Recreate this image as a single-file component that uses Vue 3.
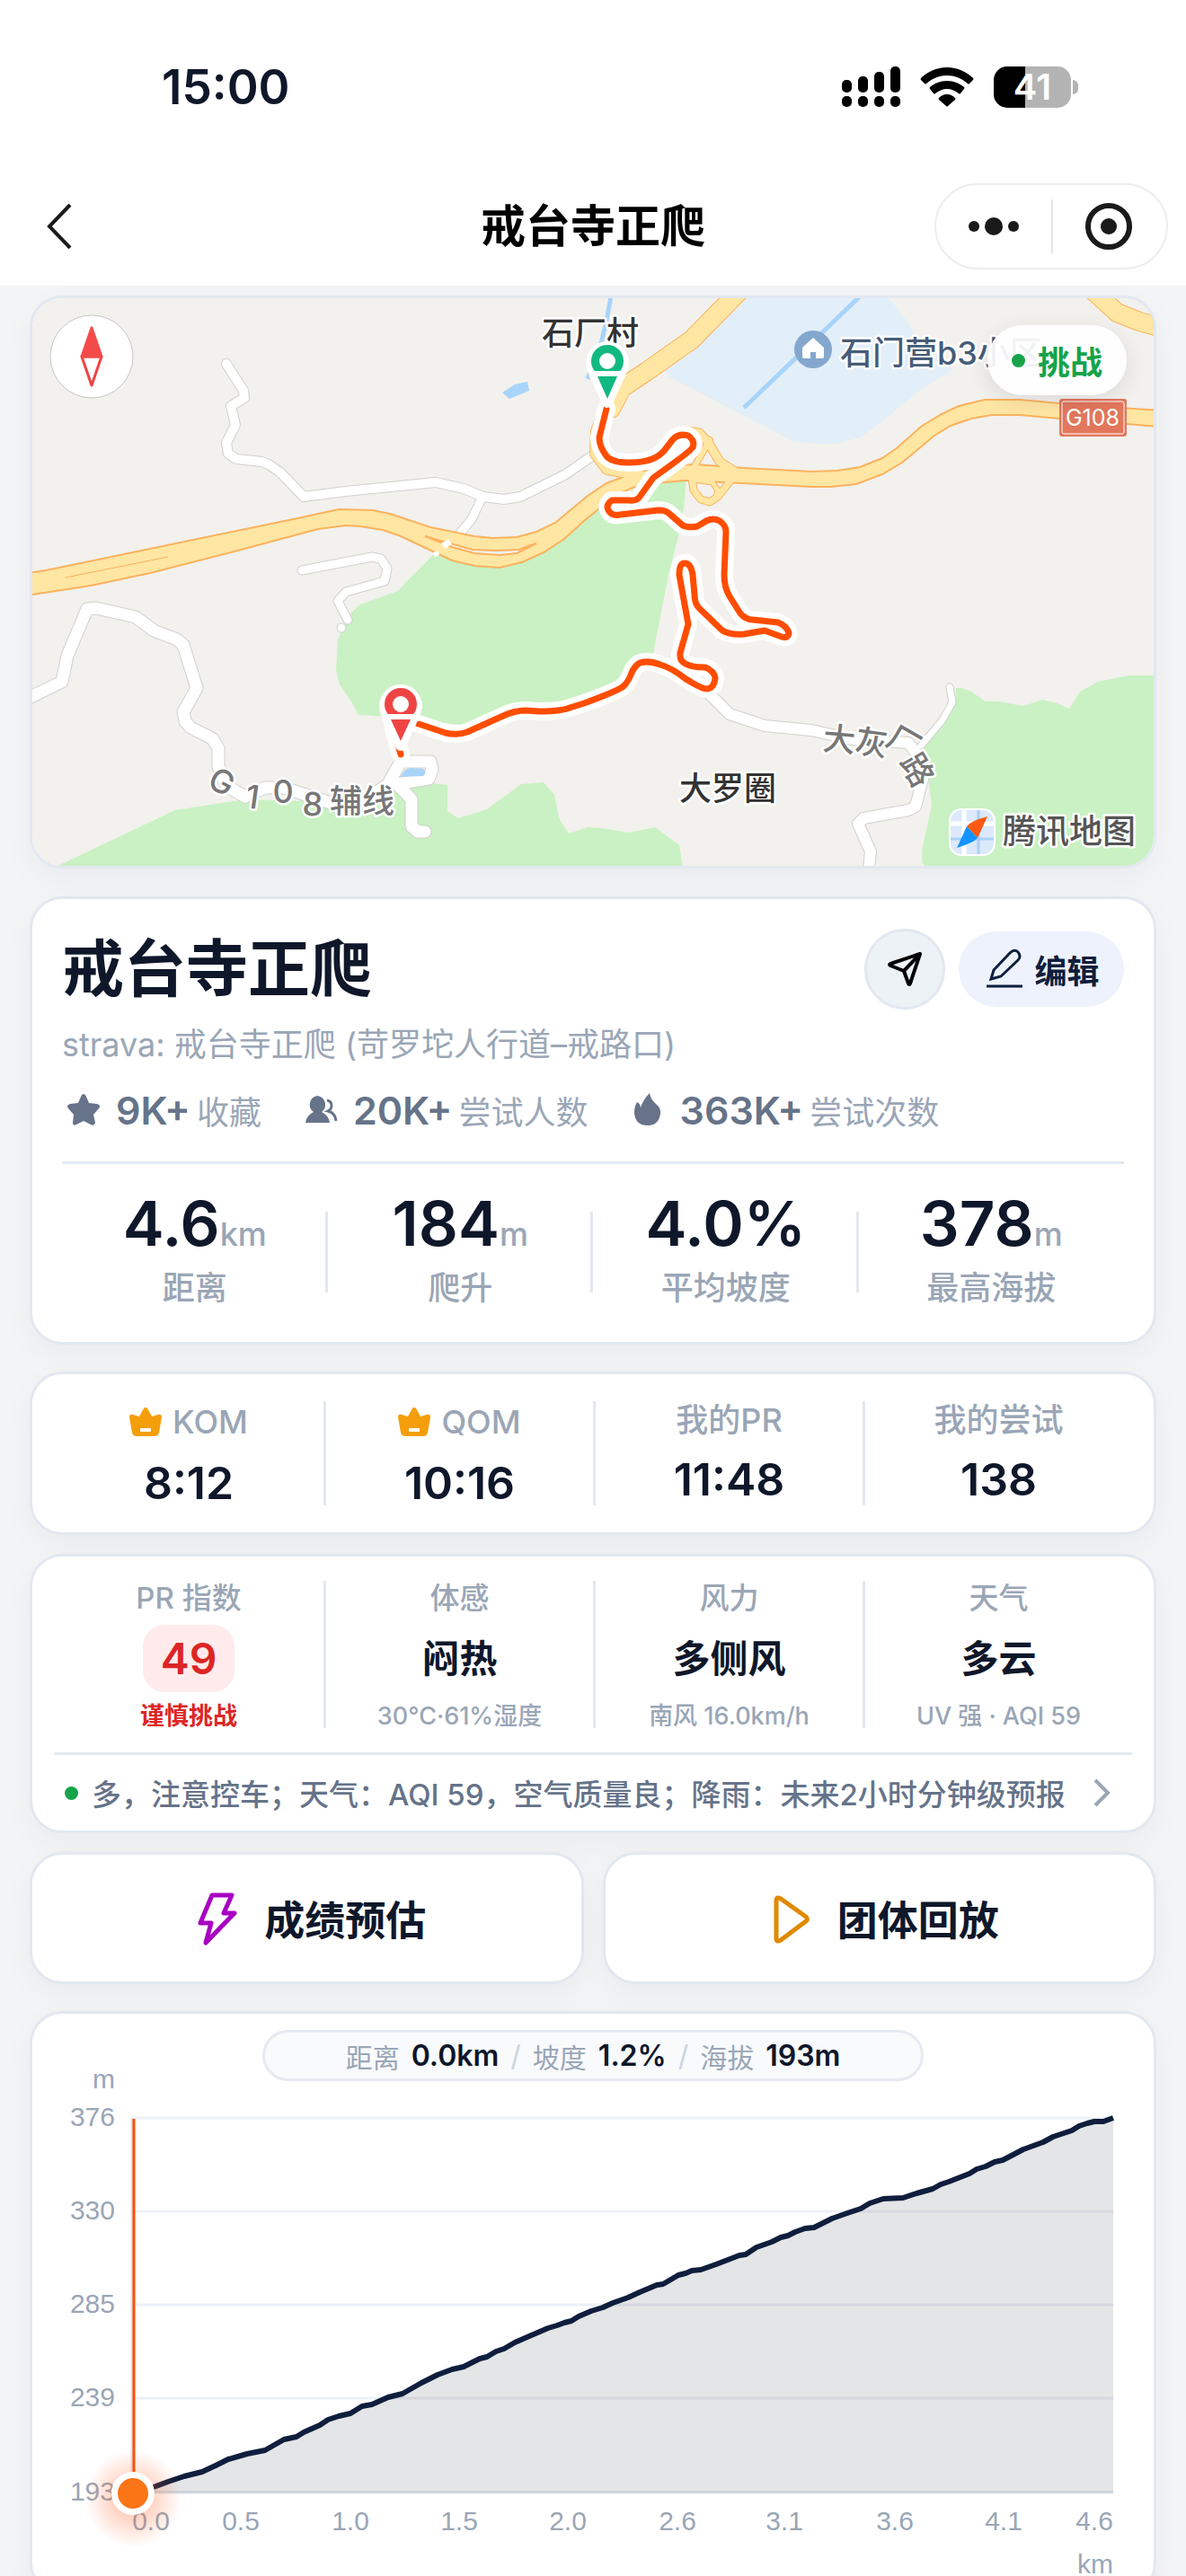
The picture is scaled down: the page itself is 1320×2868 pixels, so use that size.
<script setup>
const counts = [
  { icon: 'star', value: '9K+', label: '收藏' },
  { icon: 'users', value: '20K+', label: '尝试人数' },
  { icon: 'flame', value: '363K+', label: '尝试次数' },
]

const metrics = [
  { value: '4.6', unit: 'km', label: '距离' },
  { value: '184', unit: 'm', label: '爬升' },
  { value: '4.0%', unit: '', label: '平均坡度' },
  { value: '378', unit: 'm', label: '最高海拔' },
]

const records = [
  { label: 'KOM', value: '8:12', crown: true },
  { label: 'QOM', value: '10:16', crown: true },
  { label: '我的PR', value: '11:48', crown: false },
  { label: '我的尝试', value: '138', crown: false },
]

const conditions = [
  { label: 'PR 指数', value: '49', note: '谨慎挑战', alert: true },
  { label: '体感', value: '闷热', note: '30℃·61%湿度', alert: false },
  { label: '风力', value: '多侧风', note: '南风 16.0km/h', alert: false },
  { label: '天气', value: '多云', note: 'UV 强 · AQI 59', alert: false },
]

const readout = [
  { label: '距离', value: '0.0km' },
  { label: '坡度', value: '1.2%' },
  { label: '海拔', value: '193m' },
]

const yTicks = [
  { y: 2358, label: '376' },
  { y: 2462, label: '330' },
  { y: 2566, label: '285' },
  { y: 2670, label: '239' },
  { y: 2775, label: '193' },
]

const xTicks = [
  { x: 168, label: '0.0' },
  { x: 268, label: '0.5' },
  { x: 390, label: '1.0' },
  { x: 511, label: '1.5' },
  { x: 632, label: '2.0' },
  { x: 754, label: '2.6' },
  { x: 873, label: '3.1' },
  { x: 996, label: '3.6' },
  { x: 1117, label: '4.1' },
  { x: 1218, label: '4.6' },
]

const profile =
  '148,2776 171,2769 187,2763 205,2757 225,2752 240,2745 254,2738 275,2732 295,2728 316,2716 330,2713 338,2708 356,2700 365,2694 377,2690 390,2687 403,2679 414,2677 432,2669 448,2665 469,2653 487,2644 503,2638 516,2635 534,2626 542,2624 552,2618 561,2615 573,2608 589,2601 610,2592 620,2589 628,2586 636,2584 644,2579 658,2573 671,2569 682,2564 699,2558 712,2552 731,2544 738,2543 755,2533 763,2531 770,2528 780,2527 797,2521 810,2516 823,2511 830,2510 842,2502 859,2496 869,2491 877,2489 885,2485 896,2481 906,2480 926,2470 943,2464 958,2459 968,2453 983,2448 1005,2447 1020,2442 1038,2437 1047,2432 1056,2429 1079,2420 1087,2415 1097,2412 1107,2407 1116,2405 1139,2393 1161,2385 1172,2379 1193,2372 1201,2367 1210,2364 1218,2362 1228,2362 1239,2358'

const whiteRoads = [
  { w: 10, d: 'M252 405L271 435L272 443L257 452L262 473L252 493L254 505L263 511L291 514L299 517L312 526L338 553L385 547L485 537L516 544L538 553L561 556L579 553L628 529L663 505' },
  { w: 9, d: 'M536 555L525 578L505 602' },
  { w: 9, d: 'M336 635L414 620L424 622L431 633L428 647L385 659L376 669L387 690' },
  { w: 9, d: 'M380 699L380 699' },
  { w: 13, d: 'M28 779L69 759L75 730L97 678L107 677L151 687L171 702L197 712L204 718L219 766L204 793L206 803L212 810L236 822L243 833L243 853L252 875L273 887L295 877L316 877L365 893L405 892L432 873L446 848L479 848L481 857L477 867L442 873L458 890L458 920L465 926L473 926' },
  { w: 12, d: 'M785 768L812 795L851 808L903 813L948 823L1011 827L1021 840L1027 867L1019 898L1011 902L961 911L955 917L969 948L967 968' },
  { w: 7, d: 'M1025 830L1048 803L1060 782L1057 765' },
]

const mainRoads = [
  { w: 20, d: 'M822 325L770 378L719 414L692 432L680 455' },
  { w: 12, d: 'M678 445L664 480L663 505L676 522L710 528' },
  { w: 20, d: 'M1218 325L1243 348L1268 358L1290 364' },
  { w: 9, d: 'M762 480L778 482L788 492L801 514L818 525' },
  { w: 6, d: 'M790 490L772 521' },
  { w: 7, d: 'M770 532L772 546L780 556L790 559L799 553L814 534' },
  { w: 5, d: 'M772 534L793 537L799 546L796 556' },
]

const highway =
  'M30 638L51 635L336 576L377 567L414 568L434 572L479 587L528 597L548 599L575 598L597 592L618 582L654 552L675 538L704 527L738 519L774 517L828 521L903 525L932 524L957 520L982 510L998 499L1025 475L1048 461L1067 452L1096 445L1135 445L1179 449L1290 457L1290 475L1179 466L1135 462L1104 462L1081 466L1058 474L1040 485L1004 515L982 528L953 539L924 542L903 542L826 538L762 535L739 537L712 540L687 550L650 580L628 600L605 615L581 626L556 632L528 630L503 624L446 597L426 590L401 586L385 585L354 589L257 615L167 638L101 652L30 663Z'

const route =
  'M675 455L667 487Q667 498 676 509Q683 515 700 515Q728 515 739 502L749 489Q756 482 766 485Q774 491 771 498Q768 503 727 532L712 553Q709 558 700 557L681 557Q674 562 677 568Q681 575 690 573L733 568Q741 568 745 572L760 585Q767 588 776 586L786 580Q794 576 801 580Q808 585 808 592L806 640Q806 654 812 664L824 683Q830 690 838 690L866 693Q876 697 878 705Q877 711 870 709L851 702L828 706Q812 707 804 702L778 677Q773 672 773 662L771 640Q769 627 762 627Q756 627 756 640L766 695L757 727Q756 736 763 739Q770 743 785 743Q795 747 796 755Q795 766 787 767Q782 767 770 760L762 755Q748 744 735 740Q722 735 712 738Q706 742 703 749Q700 758 694 764Q688 769 650 783L634 788Q624 792 600 792L585 791Q573 791 560 797L520 815Q508 819 496 816L463 805L437 800L438 812L446 840'
</script>

<template>
  <div class="page">
    <header class="top">
      <div class="status">
        <span class="clock">15:00</span>
        <div class="status-icons">
          <svg class="signal" viewBox="0 0 67 46" aria-hidden="true">
            <rect x="0" y="15" width="11" height="14" rx="5" />
            <rect x="18" y="11" width="11" height="18" rx="5" />
            <rect x="36" y="6" width="11" height="23" rx="5" />
            <rect x="54" y="0" width="11" height="29" rx="5" />
            <rect x="0" y="33" width="11" height="12" rx="5" />
            <rect x="18" y="33" width="11" height="12" rx="5" />
            <rect x="36" y="33" width="11" height="12" rx="5" />
            <rect x="54" y="33" width="11" height="12" rx="5" />
          </svg>
          <svg class="wifi" viewBox="0 0 60 44" aria-hidden="true">
            <path d="M30 0C42 0 52 5 59 12Q60 13 59 14L55 18Q54 19 53 18C46 12 38 9 30 9S14 12 7 18Q6 19 5 18L1 14Q0 13 1 12C8 5 18 0 30 0Z" />
            <path d="M30 15C38 15 44 18 49 22Q50 23 49 24L45 29Q44 30 43 29C39 26 35 24 30 24S21 26 17 29Q16 30 15 29L11 24Q10 23 11 22C16 18 22 15 30 15Z" />
            <path d="M30 30C34 30 37 32 39 34Q40 35 39 36L31 43Q30 44 29 43L21 36Q20 35 21 34C23 32 26 30 30 30Z" />
          </svg>
          <div class="battery"><span>41</span></div>
        </div>
      </div>
      <nav class="nav">
        <button class="back" aria-label="返回">
          <svg viewBox="0 0 28 50"><path d="M26 1L3 25L26 49" /></svg>
        </button>
        <h1 class="nav-title">戒台寺正爬</h1>
        <div class="capsule">
          <button aria-label="更多">
            <svg viewBox="0 0 60 60"><circle cx="8" cy="30" r="6" /><circle cx="30" cy="30" r="10" /><circle cx="52" cy="30" r="6" /></svg>
          </button>
          <button aria-label="关闭">
            <svg viewBox="0 0 60 60"><circle class="ring" cx="30" cy="30" r="23" /><circle cx="30" cy="30" r="9" /></svg>
          </button>
        </div>
      </nav>
    </header>

    <main class="content">
      <section class="card map-card">
        <svg class="map" viewBox="36 332 1248 632" role="img" aria-label="路线地图">
          <rect x="36" y="332" width="1248" height="632" fill="#f2f1ed" />
          <path fill="#c9f1c3" d="M483 617L450 650L443 658L401 673L389 684L376 712L374 747L378 762L389 778L399 796L432 798L512 807L650 775L700 760L727 727L744 640L756 593L761 567L764 530L733 530L650 575L556 625Z" />
          <path fill="#c9f1c3" d="M60 966L195 902L273 890L369 893L479 872L498 874V903L510 911L542 901L580 873L605 871L617 885L622 911L633 928L654 921L670 922L700 927L729 921L756 941L760 966Z" />
          <path fill="#c9f1c3" d="M1025 833L1046 803L1064 780V766L1070 766L1081 770L1097 781L1112 781L1139 786L1160 779L1177 783L1190 789L1202 770L1222 759L1257 752H1286V966H1031L1026 960V947L1037 897L1033 863Z" />
          <path fill="#e2eef8" d="M818 330L826 340L810 350L762 397L740 413L746 420L884 492L909 494L932 494L957 487L977 473L1023 435L1060 412L1040 385L1019 373L1009 357L988 330Z" />
          <g class="stream">
            <path d="M957 330L828 454" />
            <path d="M680 330L675 357L669 382L654 422" />
          </g>
          <path fill="#a8d4fa" d="M559 437L573 428L587 425L589 435L567 444Z" />
          <path v-for="r in whiteRoads" :key="'c' + r.d" class="road" stroke="#d0d0ce" :stroke-width="r.w + 2" :d="r.d" />
          <path v-for="r in whiteRoads" :key="r.d" class="road" stroke="#fff" :stroke-width="r.w" :d="r.d" />
          <path fill="#a8d4fa" d="M446 865Q450 855 458 855L471 856Q476 860 471 864Z" />
          <path v-for="r in mainRoads" :key="'c' + r.d" class="road" stroke="#fbb25e" :stroke-width="r.w + 2" :d="r.d" />
          <path :d="highway" fill="#ffe6a3" stroke="#fbb25e" stroke-width="2" />
          <path v-for="r in mainRoads" :key="r.d" class="road" stroke="#ffe6a3" :stroke-width="r.w" :d="r.d" />
          <path fill="#f2f1ed" stroke="#fbb25e" stroke-width="2" d="M473 597L526 612L552 613L577 612L597 605L575 616L556 618L528 616L503 609Z" />
          <path fill="none" stroke="#fbb25e" stroke-width="1" d="M73 643L187 620" />
          <path fill="none" stroke="#fff" stroke-width="7" d="M501 603L493 608" />
          <path fill="none" stroke="#fff" stroke-width="5" d="M488 615L483 618" />
          <path class="halo" :d="route" />
          <path class="route" :d="route" />

          <g class="place">
            <text x="603" y="384">石厂村</text>
            <text x="756" y="891">大罗圈</text>
          </g>
          <circle cx="905" cy="389" r="21" fill="#84a7cd" />
          <path fill="#fff" d="M905 376L917 387V397Q917 399 915 399H908V392H902V399H895Q893 399 893 397V387Z" />
          <text class="poi" x="935" y="406">石门营b3小区</text>
          <g class="street">
            <text transform="translate(247 870) rotate(28)" y="13">G</text>
            <text transform="translate(281 887) rotate(8)" y="13">1</text>
            <text transform="translate(315 881)" y="13">0</text>
            <text transform="translate(348 895) rotate(3)" y="13">8</text>
            <text x="403" y="905">辅线</text>
            <text transform="translate(934 823) rotate(5)" y="13">大</text>
            <text transform="translate(970 827) rotate(8)" y="13">灰</text>
            <text transform="translate(1006 826) rotate(30)" y="13">厂</text>
            <text transform="translate(1021 857) rotate(60)" y="13">路</text>
          </g>
          <rect x="1179" y="444" width="75" height="42" rx="3" fill="#e2775c" />
          <rect x="1182" y="447" width="69" height="36" rx="2" fill="none" stroke="#fff" stroke-width="1" />
          <text class="shield" x="1216" y="474">G108</text>

          <g transform="translate(676 402)">
            <path class="pin-edge" d="M-17 8A18 18 0 1 1 17 8L0 46Z" />
            <circle r="18" fill="#12b981" /><circle r="9" fill="#fff" />
            <rect x="-20" y="11" width="40" height="8" fill="#fff" />
            <path fill="#12b981" d="M-11 17H11L0 42Z" />
          </g>
          <g transform="translate(446 784)">
            <path class="pin-edge" d="M-17 8A18 18 0 1 1 17 8L0 46Z" />
            <circle r="18" fill="#ef4444" /><circle r="9" fill="#fff" />
            <rect x="-20" y="11" width="40" height="8" fill="#fff" />
            <path fill="#ef4444" d="M-11 17H11L0 41Z" />
          </g>

          <circle cx="102" cy="397" r="46" fill="#fff" stroke="#c4c4c4" stroke-width="1" />
          <path fill="#fff" stroke="#ef4444" stroke-width="3" stroke-linejoin="round" d="M91 397H113L102 429Z" />
          <path fill="#f54a4a" stroke="#f54a4a" stroke-width="3" stroke-linejoin="round" d="M91 397L102 365L113 397Z" />

          <rect x="1056" y="900" width="52" height="53" rx="14" fill="#fff" />
          <rect x="1058" y="902" width="48" height="49" rx="12" fill="#dce9fb" />
          <path stroke="#fff" stroke-width="5" fill="none" d="M1073 902V951M1058 917H1106" />
          <path stroke="#a9d0fa" stroke-width="3" fill="none" d="M1089 902V951M1058 934H1106" />
          <path fill="#ff5a12" d="M1099 909L1088 933L1076 920Q1080 914 1099 909Z" />
          <path fill="#1494ff" d="M1065 944L1076 920L1088 933Q1084 938 1065 944Z" />
          <text class="brand" x="1116" y="939">腾讯地图</text>
        </svg>
        <span class="tag"><i></i>挑战</span>
      </section>

      <section class="card summary">
        <div class="summary-head">
          <h2>戒台寺正爬</h2>
          <button class="share" aria-label="分享">
            <svg viewBox="0 0 90 90"><path d="M62 28L29 39Q27 40 29 41L44 47L49 61Q50 63 51 61ZM44 47L62 28" /></svg>
          </button>
          <button class="edit">
            <svg viewBox="0 0 40 46"><path d="M5 34L8 24L26 5Q31 0 35 4Q39 9 35 13L16 31ZM0 42H40" /></svg>
            编辑
          </button>
        </div>
        <p class="source">strava: 戒台寺正爬 (苛罗坨人行道–戒路口)</p>
        <ul class="counts">
          <li v-for="c in counts" :key="c.label">
            <svg viewBox="0 0 48 40" aria-hidden="true">
              <path v-if="c.icon === 'star'" d="M24 2Q26 2 27 5L30 12L39 13Q44 15 41 18L35 25L37 34Q36 38 32 36L24 32L16 36Q12 38 12 34L13 25L7 18Q4 15 9 13L18 12L21 5Q22 2 24 2Z" />
              <template v-else-if="c.icon === 'users'">
                <path d="M20 4A10 10 0 0 1 25 22Q33 26 34 34H7Q8 26 16 22A10 10 0 0 1 20 4Z" />
                <path class="thin" d="M31 9Q36 10 36 15Q36 19 32 21Q40 23 41 32" />
              </template>
              <path v-else d="M26 1Q27 8 33 13Q39 18 38 24Q36 37 24 37Q10 37 9 23Q9 16 12 11Q15 12 16 17Q19 8 26 1Z" />
            </svg>
            <strong>{{ c.value }}</strong><span>{{ c.label }}</span>
          </li>
        </ul>
        <dl class="metrics">
          <div v-for="m in metrics" :key="m.label">
            <dd>{{ m.value }}<small>{{ m.unit }}</small></dd>
            <dt>{{ m.label }}</dt>
          </div>
        </dl>
      </section>

      <section class="card records">
        <dl class="cells">
          <div v-for="r in records" :key="r.label">
            <dt>
              <svg v-if="r.crown" class="crown" viewBox="0 0 36 34" aria-hidden="true">
                <path d="M16 2Q18 0 20 2L25 11L32 9Q36 8 36 12L33 29Q32 33 28 33H8Q4 33 3 29L0 12Q0 8 4 9L11 11Z" />
                <rect x="12" y="24" width="12" height="4" rx="1" fill="#fff" />
              </svg>
              {{ r.label }}
            </dt>
            <dd>{{ r.value }}</dd>
          </div>
        </dl>
      </section>

      <section class="card conditions">
        <dl class="cells">
          <div v-for="c in conditions" :key="c.label" :class="{ alert: c.alert }">
            <dt>{{ c.label }}</dt>
            <dd class="reading"><span>{{ c.value }}</span></dd>
            <dd class="note">{{ c.note }}</dd>
          </div>
        </dl>
        <a class="ticker" href="#weather">
          <i></i>
          <span>多，注意控车；天气：AQI 59，空气质量良；降雨：未来2小时分钟级预报</span>
          <svg viewBox="0 0 20 32" aria-hidden="true"><path d="M3 2L17 16L3 30" /></svg>
        </a>
      </section>

      <div class="actions">
        <button class="card">
          <svg viewBox="0 0 50 60" aria-hidden="true"><path stroke="#a800c2" d="M19 4H41L32 24H44L12 57L18 35H6Z" /></svg>
          成绩预估
        </button>
        <button class="card">
          <svg viewBox="0 0 50 60" aria-hidden="true"><path stroke="#e08a00" d="M9 10Q9 5 14 8L42 28Q45 31 42 33L14 54Q9 57 9 52Z" /></svg>
          团体回放
        </button>
      </div>

      <section class="card chart">
        <p class="readout">
          <template v-for="(r, i) in readout" :key="r.label">
            <span v-if="i" class="slash">/</span>
            <span>{{ r.label }}</span>
            <strong>{{ r.value }}</strong>
          </template>
        </p>
        <svg class="plot" viewBox="36 2317 1248 570" role="img" aria-label="海拔剖面图">
          <defs>
            <radialGradient id="glow">
              <stop offset="0.4" stop-color="#ff5a1f" stop-opacity="0.26" />
              <stop offset="1" stop-color="#ff5a1f" stop-opacity="0" />
            </radialGradient>
          </defs>
          <g stroke="#edf1f6" stroke-width="3">
            <path v-for="t in yTicks" :key="t.y" :d="`M147 ${t.y}H1239`" />
          </g>
          <path d="M147 2775H1239M147 2358V2775" stroke="#dde3ea" stroke-width="3" />
          <polygon :points="`${profile} 1239,2775 148,2775`" fill="#0f172a" fill-opacity="0.115" />
          <polyline :points="profile" fill="none" stroke="#0f1e3d" stroke-width="6" stroke-linejoin="round" />
          <g class="axis" text-anchor="end">
            <text x="128" y="2325">m</text>
            <text v-for="t in yTicks" :key="t.label" x="128" :y="t.y + 9">{{ t.label }}</text>
            <text x="1239" y="2865">km</text>
          </g>
          <g class="axis" text-anchor="middle">
            <text v-for="t in xTicks" :key="t.label" :x="t.x" y="2817">{{ t.label }}</text>
          </g>
          <path d="M149 2359V2776" stroke="#ff4d00" stroke-width="3" />
          <circle cx="148" cy="2782" r="54" fill="url(#glow)" />
          <circle cx="148" cy="2776" r="24" fill="#fff" />
          <circle cx="148" cy="2776" r="17" fill="#fb7516" />
        </svg>
      </section>
    </main>
  </div>
</template>

<style>
html,
body {
  margin: 0;
  background: #f3f4f6;
}
</style>

<style scoped>
.page {
  display: flex;
  flex-direction: column;
  height: 100vh;
  overflow: hidden;
  background: #f3f4f6;
  color: #0f172a;
  font-family: Inter, "Noto Sans CJK SC", sans-serif;
}

h1, h2, p, ul, dl, dd, dt {
  margin: 0;
  padding: 0;
}

button {
  margin: 0;
  padding: 0;
  border: 0;
  background: none;
  color: inherit;
  font: inherit;
}

svg {
  display: block;
}

.top {
  flex: none;
  background: #fff;
}

.status {
  display: flex;
  justify-content: space-between;
  align-items: center;
  padding: 66px 120px 0 180px;
  height: 62px;
}

.clock {
  font-size: 53px;
  line-height: 62px;
  font-weight: 600;
}

.status-icons {
  display: flex;
  align-items: center;
  gap: 20px;
}

.signal {
  width: 67px;
  height: 46px;
}

.wifi {
  width: 60px;
  height: 44px;
}

.battery {
  position: relative;
  display: flex;
  justify-content: center;
  width: 86px;
  height: 46px;
  margin-left: 2px;
  margin-right: 8px;
  border-radius: 15px;
  background: linear-gradient(90deg, #000 41%, #b3b3b3 41%);
  color: #fff;
  font-size: 40px;
  line-height: 46px;
  font-weight: 600;
}

.battery::after {
  content: "";
  position: absolute;
  left: 88px;
  top: 15px;
  width: 6px;
  height: 16px;
  border-radius: 0 6px 6px 0;
  background: #b3b3b3;
}

.nav {
  display: grid;
  grid-template-columns: 1fr auto 1fr;
  align-items: center;
  height: 96px;
  padding: 76px 20px 18px;
}

.back {
  justify-self: start;
  margin-left: 32px;
}

.back svg {
  width: 28px;
  height: 50px;
}

.back path {
  fill: none;
  stroke: #1a1a1a;
  stroke-width: 4;
}

.nav-title {
  color: #000;
  font-size: 50px;
  line-height: 60px;
  font-weight: 600;
}

.capsule {
  display: flex;
  justify-self: end;
  width: 260px;
  height: 96px;
  box-sizing: border-box;
  border: 2px solid #ededed;
  border-radius: 48px;
}

.capsule button {
  flex: 1;
  display: flex;
  align-items: center;
  justify-content: center;
}

.capsule button + button {
  background: linear-gradient(#e5e5e5, #e5e5e5) left center / 2px 60px no-repeat;
}

.capsule svg {
  width: 60px;
  height: 60px;
  fill: #1a1a1a;
}

.capsule .ring {
  fill: none;
  stroke: #1a1a1a;
  stroke-width: 6;
}

.content {
  flex: 1;
  min-height: 0;
  overflow: hidden;
  padding: 11px 33px 0;
}

.card {
  box-sizing: border-box;
  border: 3px solid #e2e8f0;
  border-radius: 36px;
  background: #fff;
  box-shadow: 0 12px 36px rgba(15, 23, 42, 0.04);
}

.map-card {
  position: relative;
  overflow: hidden;
}

.map {
  width: 100%;
}

.stream {
  fill: none;
  stroke: #a8d4fa;
  stroke-width: 5;
}

.road {
  fill: none;
  stroke-linecap: round;
  stroke-linejoin: round;
}

.halo,
.route {
  fill: none;
  stroke-linejoin: round;
  stroke-linecap: round;
}

.halo {
  stroke: #fff;
  stroke-width: 20;
}

.route {
  stroke: #ff4d00;
  stroke-width: 7;
}

.map text {
  font-size: 36px;
  stroke: #fff;
  stroke-width: 5;
  stroke-linejoin: round;
  paint-order: stroke;
}

.place {
  fill: #333;
  font-weight: 500;
}

.map .poi {
  fill: #465c78;
  font-weight: 500;
}

.street {
  fill: #777;
  font-weight: 500;
  text-anchor: middle;
}

.map .shield {
  fill: #fff;
  stroke: none;
  font-size: 25px;
  text-anchor: middle;
}

.map .brand {
  fill: #555;
  font-size: 37px;
  font-weight: 500;
}

.pin-edge {
  fill: #fff;
  stroke: #fff;
  stroke-width: 12;
  stroke-linejoin: round;
}

.tag {
  position: absolute;
  top: 30px;
  right: 30px;
  display: flex;
  align-items: center;
  gap: 14px;
  height: 78px;
  padding: 0 27px;
  border-radius: 39px;
  background: rgba(255, 255, 255, 0.92);
  box-shadow: 0 6px 24px rgba(15, 23, 42, 0.1);
  color: #16a34a;
  font-size: 36px;
  font-weight: 700;
}

.tag i,
.ticker i {
  flex: none;
  width: 15px;
  height: 15px;
  border-radius: 50%;
  background: #16a34a;
}

.summary {
  margin-top: 31px;
  padding: 33px 33px 36px;
}

.summary-head {
  display: flex;
  align-items: center;
}

.summary-head h2 {
  flex: 1;
  font-size: 69px;
  line-height: 90px;
  font-weight: 700;
}

.share {
  width: 90px;
  height: 90px;
  margin-right: 15px;
  box-sizing: border-box;
  border: 3px solid #e2e8f0;
  border-radius: 50%;
  background: #edf2f7;
}

.share svg {
  width: 90px;
  height: 90px;
  margin: -3px;
}

.share path {
  fill: none;
  stroke: #000;
  stroke-width: 4;
  stroke-linejoin: round;
}

.edit {
  display: flex;
  align-items: center;
  justify-content: center;
  gap: 13px;
  width: 184px;
  height: 84px;
  box-sizing: border-box;
  padding-left: 4px;
  border-radius: 42px;
  background: #edf2fc;
  color: #0f1e3d;
  font-size: 36px;
  font-weight: 700;
}

.edit svg {
  width: 40px;
  height: 46px;
}

.edit path {
  fill: none;
  stroke: #0f1e3d;
  stroke-width: 3;
}

.source {
  margin-top: 15px;
  color: #9aa6b6;
  font-size: 36px;
  line-height: 48px;
}

.counts {
  display: flex;
  gap: 42px;
  margin-top: 25px;
  padding-bottom: 33px;
  border-bottom: 3px solid #e2e8f0;
  list-style: none;
}

.counts li {
  display: flex;
  align-items: center;
  height: 48px;
}

.counts svg {
  width: 48px;
  height: 40px;
  fill: #667389;
}

.counts .thin {
  fill: none;
  stroke: #667389;
  stroke-width: 3;
}

.counts strong {
  margin: 0 7px 0 12px;
  color: #667389;
  font-size: 43px;
  font-weight: 600;
}

.counts span {
  color: #9aa6b6;
  font-size: 36px;
}

.metrics {
  display: grid;
  grid-template-columns: repeat(4, 1fr);
  margin-top: 24px;
}

.metrics div,
.cells div {
  text-align: center;
}

.metrics div {
  background: linear-gradient(#e2e8f0, #e2e8f0) right 29px / 3px 90px no-repeat;
}

.metrics div:last-child {
  background: none;
}

.metrics dd {
  height: 84px;
  font-size: 69px;
  line-height: 84px;
  font-weight: 600;
}

.metrics small {
  color: #9aa6b6;
  font-size: 36px;
  line-height: 36px;
  font-weight: 500;
}

.metrics dt {
  margin-top: 6px;
  color: #9aa6b6;
  font-size: 36px;
  line-height: 48px;
  font-weight: 500;
}

.records {
  margin-top: 30px;
  padding: 30px 24px;
}

.cells {
  display: grid;
  grid-template-columns: repeat(4, 1fr);
}

.cells div + div {
  border-left: 3px solid #e2e8f0;
}

.records .cells div {
  height: 116px;
}

.records dt {
  display: flex;
  justify-content: center;
  align-items: center;
  gap: 12px;
  color: #9aa6b6;
  font-size: 36px;
  line-height: 42px;
  font-weight: 500;
}

.records dt:has(.crown) {
  line-height: 46px;
}

.crown {
  width: 36px;
  height: 34px;
  fill: #f59e0b;
}

.records dd {
  margin-top: 15px;
  font-size: 50px;
  line-height: 60px;
  font-weight: 600;
}

.conditions {
  margin-top: 21px;
  padding: 27px 24px 0;
}

.conditions .cells div {
  height: 164px;
}

.conditions dt {
  color: #9aa6b6;
  font-size: 33px;
  line-height: 38px;
  font-weight: 500;
}

.reading {
  display: flex;
  justify-content: center;
  margin-top: 11px;
  font-size: 42px;
  line-height: 75px;
  font-weight: 700;
}

.note {
  margin-top: 9px;
  color: #9aa6b6;
  font-size: 27px;
  line-height: 36px;
  font-weight: 500;
}

.alert .reading span {
  width: 102px;
  border-radius: 24px;
  background: #ffebeb;
  color: #dc2626;
  font-size: 48px;
  font-weight: 600;
}

.alert .note {
  color: #dc2626;
  font-weight: 700;
}

.ticker {
  display: flex;
  align-items: center;
  height: 84px;
  margin-top: 27px;
  padding: 0 24px 0 12px;
  border-top: 3px solid #e2e8f0;
  color: #667389;
  font-size: 33px;
  font-weight: 500;
  text-decoration: none;
}

.ticker span {
  flex: 1;
  margin: 0 18px 0 15px;
  overflow: hidden;
  white-space: nowrap;
}

.ticker svg {
  width: 20px;
  height: 32px;
}

.ticker path {
  fill: none;
  stroke: #9aa6b6;
  stroke-width: 4;
}

.actions {
  display: grid;
  grid-template-columns: 1fr 1fr;
  gap: 21px;
  margin-top: 21px;
}

.actions .card {
  display: flex;
  align-items: center;
  justify-content: center;
  gap: 27px;
  height: 147px;
  padding-left: 9px;
  font-size: 45px;
  font-weight: 700;
}

.actions svg {
  width: 50px;
  height: 60px;
  fill: none;
  stroke-width: 5;
  stroke-linejoin: round;
}

.chart {
  margin-top: 30px;
  padding-top: 18px;
}

.readout {
  display: flex;
  align-items: center;
  justify-content: center;
  gap: 13px;
  width: 59%;
  height: 57px;
  margin: 0 auto;
  box-sizing: border-box;
  border: 3px solid #e5eaf1;
  border-radius: 29px;
  background: #f8fafc;
  color: #9aa6b6;
  font-size: 30px;
}

.readout strong {
  color: #0f172a;
  font-size: 32px;
  font-weight: 600;
}

.readout .slash {
  color: #cbd5e1;
  font-size: 32px;
}

.plot {
  width: 100%;
  overflow: visible;
}

.axis {
  fill: #9aa6b6;
  font-family: "Liberation Sans", sans-serif;
  font-size: 30px;
}
</style>
